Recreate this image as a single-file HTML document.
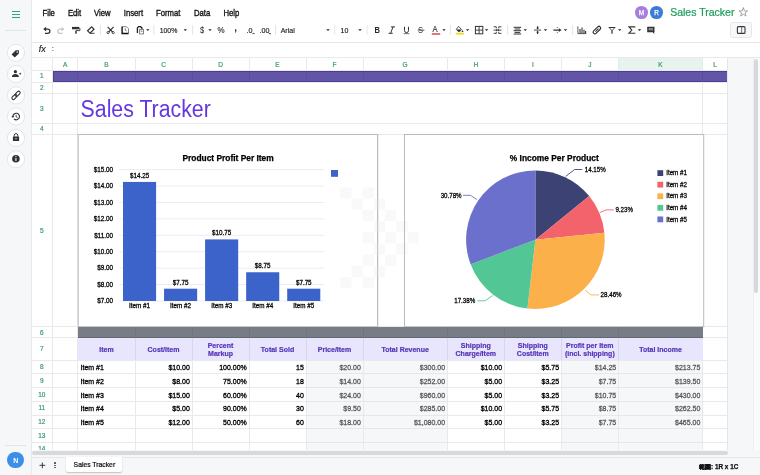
<!DOCTYPE html>
<html><head><meta charset="utf-8">
<style>
*{margin:0;padding:0;box-sizing:border-box}
html,body{width:760px;height:475px;overflow:hidden;background:#fff;font-family:"Liberation Sans",sans-serif;color:#222}
#root{position:absolute;left:0;top:0;width:760px;height:475px;overflow:hidden;background:#fff;will-change:transform}
.a{position:absolute}
.t{position:absolute;white-space:nowrap;line-height:1}
.hl{position:absolute;height:1px;background:#e4e4e4}
.vl{position:absolute;width:1px;background:#e4e4e4}
.menu{font-size:7.7px;color:#111;top:9.7px;-webkit-text-stroke:0.3px #111;transform:scaleY(1.17);transform-origin:0 6.5px}
.sep{position:absolute;top:25px;width:1px;height:10px;background:#e2e2e2}
.car{position:absolute;top:29.5px;width:0;height:0;border-left:2px solid transparent;border-right:2px solid transparent;border-top:2px solid #444}
.ic{position:absolute;top:25px;width:10px;height:10px;overflow:visible}
.rn{position:absolute;left:31px;width:21.5px;text-align:center;font-size:6.5px;color:#3d9a70;line-height:1;-webkit-text-stroke:0.2px #3d9a70}
.cn{position:absolute;top:61.6px;text-align:center;font-size:6.5px;color:#3d9a70;line-height:1;-webkit-text-stroke:0.2px #3d9a70}
.sb{position:absolute;left:7.3px;width:17px;height:17px;border-radius:50%;background:#fff;border:1px solid #e6e7ea}
.d{position:absolute;font-size:7px;line-height:1;color:#000;white-space:nowrap;-webkit-text-stroke:0.3px #000;transform:scaleY(1.1);transform-origin:50% 80%}
.r{text-align:right}
.g{color:#555;-webkit-text-stroke:0.25px #555}
.hd{position:absolute;font-size:7px;line-height:1.15;color:#5534b8;font-weight:bold;text-align:center;white-space:nowrap;-webkit-text-stroke:0.2px #5534b8;transform:scaleY(1.08)}
</style></head><body><div id="root">

<!-- sidebar -->
<div class="a" style="left:0;top:0;width:31.5px;height:475px;background:#f6f7f9;border-right:1px solid #e8e9ec"></div>
<div class="a" style="left:12px;top:11px;width:8px;height:1.3px;background:#2fa56d"></div>
<div class="a" style="left:12px;top:14px;width:8px;height:1.3px;background:#2fa56d"></div>
<div class="a" style="left:12px;top:17px;width:8px;height:1.3px;background:#2fa56d"></div>
<div class="a" style="left:5px;top:29.5px;width:21px;height:1px;background:#e3e4e7"></div>
<svg class="a" style="left:0;top:0" width="32" height="475" viewBox="0 0 32 475">
<g fill="#fff" stroke="#e4e5e8" stroke-width="1">
<circle cx="16" cy="52.8" r="8.6"/><circle cx="16" cy="74.1" r="8.6"/><circle cx="16" cy="95.4" r="8.6"/>
<circle cx="16" cy="116.6" r="8.6"/><circle cx="16" cy="137.9" r="8.6"/><circle cx="16" cy="159.2" r="8.6"/>
</g>
<g fill="#333">
<!-- tag -->
<g transform="rotate(-45 16.1 53.1)"><path d="M12.2 50.9 Q12 50.9 12 51.2 V55 Q12 55.3 12.3 55.3 H17.8 L20.2 53.1 L17.8 50.9 Z"/><circle cx="17.7" cy="53.1" r="0.75" fill="#fff"/></g>
<!-- person add -->
<circle cx="15.4" cy="71.7" r="1.6"/>
<path d="M11.9 77.1 C11.9 74.9 13.6 74.1 15.4 74.1 C17.2 74.1 18.9 74.9 18.9 77.1 Z"/>
<path d="M19.2 73.3 H21.2 V74.1 H19.2 Z M19.8 72.7 H20.6 V74.7 H19.8 Z"/>
<!-- link -->
<g transform="rotate(-45 16 95.4)" fill="none" stroke="#333" stroke-width="1.1"><rect x="10.8" y="93.9" width="6" height="3" rx="1.5"/><rect x="15.2" y="93.9" width="6" height="3" rx="1.5"/></g>
<!-- history -->
<path d="M12.9 116.6 A3.3 3.3 0 1 1 14 119" fill="none" stroke="#333" stroke-width="1.1"/>
<polygon points="11.4,115.9 14.4,115.9 12.9,117.9"/>
<path d="M16.1 114.8 V116.8 L17.6 117.9" fill="none" stroke="#333" stroke-width="0.9"/>
<!-- lock -->
<rect x="12.9" y="136.6" width="6.2" height="4.4" rx="0.6"/>
<path d="M14.2 136.8 V135.4 A1.8 1.8 0 0 1 17.8 135.4 V136.8" fill="none" stroke="#333" stroke-width="1"/>
<circle cx="16" cy="138.7" r="0.6" fill="#fff"/>
<!-- info -->
<circle cx="15.9" cy="158.8" r="3.8"/>
<rect x="15.4" y="158.1" width="1.05" height="2.8" fill="#fff"/><circle cx="15.92" cy="156.6" r="0.62" fill="#fff"/>
</g>
</svg>

<div class="a" style="left:5px;top:444.5px;width:21px;height:1px;background:#e3e4e7"></div>
<div class="a" style="left:7.4px;top:451.6px;width:16.8px;height:16.8px;border-radius:50%;background:#3d8ee8"></div>
<div class="t" style="left:7.4px;width:16.8px;text-align:center;top:456.6px;font-size:7px;color:#fff;font-weight:bold">N</div>

<!-- menu -->
<div class="t menu" style="left:42.5px">File</div>
<div class="t menu" style="left:67.9px">Edit</div>
<div class="t menu" style="left:94px">View</div>
<div class="t menu" style="left:123.8px">Insert</div>
<div class="t menu" style="left:156px">Format</div>
<div class="t menu" style="left:194px">Data</div>
<div class="t menu" style="left:223.5px">Help</div>

<!-- title right -->
<div class="a" style="left:635.1px;top:6.1px;width:12.6px;height:12.6px;border-radius:50%;background:#a47fdd"></div>
<div class="t" style="left:635.1px;width:12.6px;text-align:center;top:9.5px;font-size:6.4px;color:#fff;-webkit-text-stroke:0.25px #fff">M</div>
<div class="a" style="left:650.2px;top:6.1px;width:12.6px;height:12.6px;border-radius:50%;background:#3a7dd6"></div>
<div class="t" style="left:650.2px;width:12.6px;text-align:center;top:9.5px;font-size:6.4px;color:#fff;-webkit-text-stroke:0.25px #fff">R</div>
<div class="t" style="left:670.2px;top:7.3px;font-size:10.5px;color:#1a9c5c;-webkit-text-stroke:0.2px #1a9c5c">Sales Tracker</div>
<svg class="a" style="left:737px;top:6px" width="12" height="12" viewBox="0 0 12 12"><polygon points="6.3,1.6 7.4,4.9 10.6,4.9 8,6.9 9,10.1 6.3,8.1 3.6,10.1 4.6,6.9 2,4.9 5.2,4.9" fill="none" stroke="#9a9a9a" stroke-width="0.9" stroke-linejoin="round"/></svg>
<div class="a" style="left:730.3px;top:22px;width:21.3px;height:15.7px;border:1px solid #e6e7ea;border-radius:2.5px;background:#f7f8f9"></div>
<svg class="a" style="left:730px;top:22px" width="22" height="16" viewBox="730 22 22 16"><rect x="737.4" y="26.6" width="7.6" height="6.8" rx="1" fill="none" stroke="#383838" stroke-width="1.1"/><rect x="741.3" y="26.8" width="0.8" height="6.4" fill="#555"/></svg>

<!-- formula bar -->
<div class="hl" style="left:31.5px;top:41.8px;width:729px;background:#e8e8e8"></div>
<div class="t" style="left:38.8px;top:45.3px;font-size:9px;font-style:italic;color:#222;-webkit-text-stroke:0.15px #222;transform:scaleY(1.08);transform-origin:0 7.6px">fx</div>
<div class="t" style="left:51.8px;top:45.4px;font-size:7.6px;color:#333;-webkit-text-stroke:0.15px #333">:</div>
<div class="hl" style="left:31.5px;top:57px;width:729px;background:#e8e8e8"></div>

<!-- TOOLBAR -->
<svg class="a" style="left:0;top:0" width="760" height="45" viewBox="0 0 760 45">
<g fill="none" stroke="#333" stroke-width="1.3" stroke-linecap="butt" stroke-linejoin="miter">
<!-- undo -->
<polygon points="43.2,29.1 46.2,26.7 46.2,31.5" fill="#333" stroke="none"/>
<path d="M45.5 29.1 H47.6 A2.3 2.1 0 0 1 47.6 33.3 H45"/>
<!-- redo -->
<g stroke="#c9c9c9"><polygon points="64.5,29.1 61.5,26.7 61.5,31.5" fill="#c9c9c9" stroke="none"/>
<path d="M62.2 29.1 H60.1 A2.3 2.1 0 0 0 60.1 33.3 H62.7"/></g>
<!-- paint format -->
<rect x="72" y="26.9" width="7" height="2.4" fill="#333" stroke="none"/>
<path d="M79 28.1 H79.9 V30.6 H75.9 V31.6" stroke-width="0.9"/>
<rect x="75.2" y="31.2" width="1.5" height="2.5" fill="#333" stroke="none"/>
<!-- eraser -->
<polygon points="87.6,30.8 91.6,26.9 94,29.3 90,33.2" stroke-width="1.2"/>
<path d="M90 33.3 H94.6" stroke-width="0.9"/>
<!-- cut -->
<path d="M107.6 26.8 L112.6 32 M113.6 26.8 L108.6 32" stroke-width="1.1"/>
<circle cx="108.1" cy="32.6" r="1.1" stroke-width="0.9"/><circle cx="113.2" cy="32.6" r="1.1" stroke-width="0.9"/>
<!-- copy -->
<path d="M122.4 26.7 H126.5 L128.5 28.7 V33.2" stroke="#777" stroke-width="0.9"/>
<path d="M122.1 26.5 V33.5 H128.6" stroke="#111" stroke-width="1.4"/>
<path d="M125.3 28.4 V30.2 L126.6 30.9" stroke="#555" stroke-width="0.8"/>
<!-- paste -->
<path d="M137.4 33 V27.9 L138.6 26.7 H140.6 L141.9 27.9 V29" stroke="#222" stroke-width="1.3"/>
<rect x="139.6" y="29.4" width="3.9" height="4.5" fill="#fff" stroke="#777" stroke-width="0.9"/>
<path d="M140.6 31.2 H142.5" stroke="#555" stroke-width="0.8"/>
<path d="M390.9 26.9 H395 M388.6 33.3 H392.7 M393 26.9 L390.6 33.3" fill="none" stroke="#333" stroke-width="1"/>
<!-- borders -->
<rect x="475.4" y="26.4" width="7.4" height="7.4" stroke-width="1"/>
<path d="M479.1 26.4 V33.8 M475.4 30.1 H482.8" stroke-width="0.9"/>
<!-- merge -->
<path d="M493.6 26.8 H496.3 V28.4 M501.4 26.8 H498.7 V28.4 M493.6 33.4 H496.3 V31.8 M501.4 33.4 H498.7 V31.8" stroke-width="0.9"/>
<path d="M493.6 30.1 H501.4" stroke-width="0.9"/>
<polygon points="497.5,30.1 496,28.9 496,31.3" fill="#333" stroke="none"/><polygon points="497.5,30.1 499,28.9 499,31.3" fill="#333" stroke="none"/>
<!-- align -->
<path d="M513.6 27.3 H521.2 M514.6 29 H520.2 M513.6 30.7 H521.2 M514.6 32.4 H520.2 M513.6 34 H521.2" stroke-width="1"/>
<!-- valign -->
<path d="M534 30.1 H541.2" stroke-width="0.9"/>
<path d="M537.6 26.2 V28.8 M537.6 31.4 V34" stroke-width="1.2"/>
<polygon points="537.6,29.4 536.2,27.8 539,27.8" fill="#333" stroke="none"/><polygon points="537.6,30.8 536.2,32.4 539,32.4" fill="#333" stroke="none"/>
<!-- wrap -->
<path d="M553.4 30.1 H559.5" stroke-width="1.3"/>
<polygon points="561.6,30.1 558.8,28.2 558.8,32" fill="#333" stroke="none"/>
<path d="M557.3 27 V28 M557.3 32.2 V33.2" stroke-width="0.8"/>
<!-- chart -->
<path d="M577.9 26.4 V33.6 H586.3" stroke-width="0.8"/>
<path d="M580 29 V33.4 M582 27.5 V33.4 M584 29.8 V33.4 M585.6 31 V33.4" stroke-width="1.1"/>
<!-- link -->
<g transform="rotate(-45 596.9 30.1)"><rect x="592.3" y="28.4" width="9.2" height="3.4" rx="1.7" stroke-width="1.2"/><path d="M594.8 30.1 H599" stroke-width="1"/></g>
<!-- filter -->
<path d="M608.2 27 H615.8 L612.6 30.6 V33.8 H611.4 V30.6 Z" fill="#333" stroke="none"/>
<path d="M609.9 28.1 H614.1 L612 30.3 Z" fill="#fff" stroke="none"/>
<!-- sigma -->
<path d="M634.8 27.4 V26.9 H628.9 L631.8 30.1 L628.9 33.3 H634.8 V32.8" stroke-width="1.1"/>
<!-- comment -->
<path d="M647.2 26.7 H654.5 V32.3 H654 L654.6 34 L652.5 32.3 H647.2 Z" fill="#333" stroke="none"/>
<rect x="648.6" y="28" width="4.4" height="2.4" fill="#888" stroke="none"/>
</g>
<!-- text-ish icons -->
<g font-family="Liberation Sans" fill="#222" stroke="#222" stroke-width="0.15">
<text transform="translate(159.7 32.8) scale(1 1.15)" font-size="6.9">100%</text>
<text transform="translate(199.9 32.8) scale(1 1.12)" font-size="7.6" stroke="none">$</text>
<text transform="translate(217.6 32.9) scale(1 1.12)" font-size="8" stroke-width="0.1">%</text>
<text transform="translate(234.6 31.2) scale(1 1.12)" font-size="8" font-weight="bold">,</text>
<text transform="translate(246.6 32.7) scale(1 1.12)" font-size="7.2">.0</text>
<text transform="translate(259.5 32.7) scale(1 1.12)" font-size="7.2">.00</text>
<text transform="translate(280.7 32.7) scale(1 1.12)" font-size="7">Arial</text>
<text transform="translate(340.6 32.7) scale(1 1.12)" font-size="7">10</text>
<text transform="translate(374.6 32.9) scale(1 1.12)" font-size="7.6" font-weight="bold" stroke="none" fill="#2a2a2a">B</text>
<path d="M404.5 26.8 V30.6 A2 2 0 0 0 408.5 30.6 V26.8" fill="none" stroke="#333" stroke-width="1"/>
<text transform="translate(418 33) scale(1 1.12)" font-size="7.6" stroke="none" fill="#333">S</text>
<text transform="translate(432.4 32.2) scale(1 1.12)" font-size="7.6" stroke-width="0.1">A</text>
</g>
<rect x="252.4" y="33.2" width="2.2" height="0.9" fill="#333"/>
<rect x="268.8" y="33.2" width="2.2" height="0.9" fill="#333"/>
<rect x="403.7" y="33.4" width="5.6" height="0.7" fill="#333"/>
<rect x="417.6" y="29.7" width="6.8" height="0.8" fill="#333"/>
<rect x="431.8" y="33.3" width="8.4" height="1.4" fill="#e23b3b"/>
<!-- fill bucket -->
<path d="M458.6 26.4 L461.6 29.6 L459 32.1 L456.2 29.4 Z" fill="none" stroke="#444" stroke-width="0.9"/>
<path d="M456.6 29.6 H461.3 L459 31.8 Z" fill="#222"/>
<circle cx="462.5" cy="31.4" r="0.8" fill="#222"/>
<rect x="455.8" y="32.8" width="8.1" height="1.8" fill="#f2e01e"/>
<!-- carets -->
<g fill="#222">
<polygon points="146.1,29.3 149.5,29.3 147.8,31.1"/>
<polygon points="183.6,29.3 187.0,29.3 185.3,31.1"/>
<polygon points="208.3,29.3 211.7,29.3 210.0,31.1"/>
<polygon points="326.3,29.3 329.7,29.3 328.0,31.1"/>
<polygon points="358.3,29.3 361.7,29.3 360.0,31.1"/>
<polygon points="442.3,29.3 445.7,29.3 444.0,31.1"/>
<polygon points="465.9,29.3 469.3,29.3 467.6,31.1"/>
<polygon points="484.9,29.3 488.3,29.3 486.6,31.1"/>
<polygon points="523.6,29.3 527.0,29.3 525.3,31.1"/>
<polygon points="543.8,29.3 547.2,29.3 545.5,31.1"/>
<polygon points="563.8,29.3 567.2,29.3 565.5,31.1"/>
<polygon points="618.0,29.3 621.4,29.3 619.7,31.1"/>
<polygon points="637.8,29.3 641.2,29.3 639.5,31.1"/>
</g>
<!-- separators -->
<g fill="#e3e3e3">
<rect x="100" y="25" width="0.9" height="10"/>
<rect x="153.4" y="25" width="0.9" height="10"/>
<rect x="192.2" y="25" width="0.9" height="10"/>
<rect x="275.1" y="25" width="0.9" height="10"/>
<rect x="334.3" y="25" width="0.9" height="10"/>
<rect x="366.6" y="25" width="0.9" height="10"/>
<rect x="449.9" y="25" width="0.9" height="10"/>
<rect x="507.2" y="25" width="0.9" height="10"/>
<rect x="572.2" y="25" width="0.9" height="10"/>
</g>
</svg>


<!-- GRID -->
<div class="a" style="left:618.90px;top:57.30px;width:83.70px;height:13.20px;background:#e7f4ee"></div>
<div class="a" style="left:31.50px;top:56.80px;width:696.10px;height:1.00px;background:#e9e9e9"></div>
<div class="a" style="left:31.50px;top:70.00px;width:696.10px;height:1.00px;background:#e9e9e9"></div>
<div class="a" style="left:31.50px;top:81.50px;width:696.10px;height:1.00px;background:#e9e9e9"></div>
<div class="a" style="left:31.50px;top:92.80px;width:696.10px;height:1.00px;background:#e9e9e9"></div>
<div class="a" style="left:31.50px;top:123.00px;width:696.10px;height:1.00px;background:#e9e9e9"></div>
<div class="a" style="left:31.50px;top:133.80px;width:696.10px;height:1.00px;background:#e9e9e9"></div>
<div class="a" style="left:31.50px;top:326.40px;width:696.10px;height:1.00px;background:#e9e9e9"></div>
<div class="a" style="left:31.50px;top:337.40px;width:696.10px;height:1.00px;background:#e9e9e9"></div>
<div class="a" style="left:31.50px;top:359.70px;width:696.10px;height:1.00px;background:#e9e9e9"></div>
<div class="a" style="left:31.50px;top:373.40px;width:696.10px;height:1.00px;background:#e9e9e9"></div>
<div class="a" style="left:31.50px;top:387.10px;width:696.10px;height:1.00px;background:#e9e9e9"></div>
<div class="a" style="left:31.50px;top:400.80px;width:696.10px;height:1.00px;background:#e9e9e9"></div>
<div class="a" style="left:31.50px;top:414.50px;width:696.10px;height:1.00px;background:#e9e9e9"></div>
<div class="a" style="left:31.50px;top:428.20px;width:696.10px;height:1.00px;background:#e9e9e9"></div>
<div class="a" style="left:31.50px;top:441.90px;width:696.10px;height:1.00px;background:#e9e9e9"></div>
<div class="a" style="left:52.10px;top:57.30px;width:1.00px;height:392.50px;background:#e9e9e9"></div>
<div class="a" style="left:77.40px;top:57.30px;width:1.00px;height:392.50px;background:#e9e9e9"></div>
<div class="a" style="left:134.50px;top:57.30px;width:1.00px;height:392.50px;background:#e9e9e9"></div>
<div class="a" style="left:191.50px;top:57.30px;width:1.00px;height:392.50px;background:#e9e9e9"></div>
<div class="a" style="left:248.50px;top:57.30px;width:1.00px;height:392.50px;background:#e9e9e9"></div>
<div class="a" style="left:305.50px;top:57.30px;width:1.00px;height:392.50px;background:#e9e9e9"></div>
<div class="a" style="left:362.50px;top:57.30px;width:1.00px;height:392.50px;background:#e9e9e9"></div>
<div class="a" style="left:446.80px;top:57.30px;width:1.00px;height:392.50px;background:#e9e9e9"></div>
<div class="a" style="left:503.80px;top:57.30px;width:1.00px;height:392.50px;background:#e9e9e9"></div>
<div class="a" style="left:560.80px;top:57.30px;width:1.00px;height:392.50px;background:#e9e9e9"></div>
<div class="a" style="left:617.90px;top:57.30px;width:1.00px;height:392.50px;background:#e9e9e9"></div>
<div class="a" style="left:702.10px;top:57.30px;width:1.00px;height:392.50px;background:#e9e9e9"></div>
<div class="a" style="left:727.10px;top:57.30px;width:1.00px;height:392.50px;background:#e9e9e9"></div>
<div class="a" style="left:78.40px;top:82.50px;width:623.70px;height:10.30px;background:#fff"></div>
<div class="a" style="left:78.40px;top:93.80px;width:623.70px;height:29.20px;background:#fff"></div>
<div class="a" style="left:78.40px;top:124.00px;width:623.70px;height:9.80px;background:#fff"></div>
<div class="a" style="left:78.40px;top:134.80px;width:623.70px;height:191.60px;background:#fff"></div>
<svg class="a" style="left:0;top:0" width="760" height="475" viewBox="0 0 760 475">
<rect x="78.2" y="134.5" width="299.4" height="192.2" fill="#fff" stroke="#b9bcc1" stroke-width="1"/>
<rect x="404.5" y="134.5" width="299.2" height="192.2" fill="#fff" stroke="#b9bcc1" stroke-width="1"/>
<rect x="340.3" y="187.4" width="11.2" height="11.2" fill="#f9f9f9"/>
<rect x="362.7" y="187.4" width="11.2" height="11.2" fill="#f9f9f9"/>
<rect x="351.5" y="198.6" width="11.2" height="11.2" fill="#f9f9f9"/>
<rect x="373.9" y="198.6" width="11.2" height="11.2" fill="#f9f9f9"/>
<rect x="362.7" y="209.8" width="11.2" height="11.2" fill="#f9f9f9"/>
<rect x="385.1" y="209.8" width="11.2" height="11.2" fill="#f9f9f9"/>
<rect x="373.9" y="221.0" width="11.2" height="11.2" fill="#f9f9f9"/>
<rect x="396.3" y="221.0" width="11.2" height="11.2" fill="#f9f9f9"/>
<rect x="362.7" y="232.2" width="11.2" height="11.2" fill="#f9f9f9"/>
<rect x="385.1" y="232.2" width="11.2" height="11.2" fill="#f9f9f9"/>
<rect x="407.5" y="232.2" width="11.2" height="11.2" fill="#f9f9f9"/>
<rect x="373.9" y="243.4" width="11.2" height="11.2" fill="#f9f9f9"/>
<rect x="396.3" y="243.4" width="11.2" height="11.2" fill="#f9f9f9"/>
<rect x="362.7" y="254.6" width="11.2" height="11.2" fill="#f9f9f9"/>
<rect x="385.1" y="254.6" width="11.2" height="11.2" fill="#f9f9f9"/>
<rect x="351.5" y="265.8" width="11.2" height="11.2" fill="#f9f9f9"/>
<rect x="373.9" y="265.8" width="11.2" height="11.2" fill="#f9f9f9"/>
<rect x="340.3" y="277.0" width="11.2" height="11.2" fill="#f9f9f9"/>
<rect x="362.7" y="277.0" width="11.2" height="11.2" fill="#f9f9f9"/>
<path d="M377.7 134.5 V326.7 M404.5 134.5 V326.7" stroke="#b9bcc1" stroke-width="1"/>
<g font-family="Liberation Sans" fill="#000" stroke="#000" stroke-width="0.25">
<text x="228.1" y="161" font-size="8.4" font-weight="bold" text-anchor="middle">Product Profit Per Item</text>
<rect x="119.2" y="169.10" width="205.2" height="1" fill="#e9edf3" stroke="none"/>
<text transform="translate(112.9 171.80) scale(1 1.1)" font-size="6.3" text-anchor="end">$15.00</text>
<rect x="119.2" y="185.53" width="205.2" height="1" fill="#e9edf3" stroke="none"/>
<text transform="translate(112.9 188.22) scale(1 1.1)" font-size="6.3" text-anchor="end">$14.00</text>
<rect x="119.2" y="201.95" width="205.2" height="1" fill="#e9edf3" stroke="none"/>
<text transform="translate(112.9 204.65) scale(1 1.1)" font-size="6.3" text-anchor="end">$13.00</text>
<rect x="119.2" y="218.38" width="205.2" height="1" fill="#e9edf3" stroke="none"/>
<text transform="translate(112.9 221.07) scale(1 1.1)" font-size="6.3" text-anchor="end">$12.00</text>
<rect x="119.2" y="234.80" width="205.2" height="1" fill="#e9edf3" stroke="none"/>
<text transform="translate(112.9 237.50) scale(1 1.1)" font-size="6.3" text-anchor="end">$11.00</text>
<rect x="119.2" y="251.22" width="205.2" height="1" fill="#e9edf3" stroke="none"/>
<text transform="translate(112.9 253.92) scale(1 1.1)" font-size="6.3" text-anchor="end">$10.00</text>
<rect x="119.2" y="267.65" width="205.2" height="1" fill="#e9edf3" stroke="none"/>
<text transform="translate(112.9 270.35) scale(1 1.1)" font-size="6.3" text-anchor="end">$9.00</text>
<rect x="119.2" y="284.07" width="205.2" height="1" fill="#e9edf3" stroke="none"/>
<text transform="translate(112.9 286.77) scale(1 1.1)" font-size="6.3" text-anchor="end">$8.00</text>
<rect x="119.2" y="300.50" width="205.2" height="1" fill="#e9edf3" stroke="none"/>
<text transform="translate(112.9 303.20) scale(1 1.1)" font-size="6.3" text-anchor="end">$7.00</text>
<rect x="123.00" y="181.92" width="33.1" height="119.08" fill="#3b63c9" stroke="none"/>
<text transform="translate(139.55 177.92) scale(1 1.1)" font-size="6.3" text-anchor="middle">$14.25</text>
<text transform="translate(139.55 308.00) scale(1 1.1)" font-size="6.3" text-anchor="middle">Item #1</text>
<rect x="164.05" y="288.68" width="33.1" height="12.32" fill="#3b63c9" stroke="none"/>
<text transform="translate(180.60 284.68) scale(1 1.1)" font-size="6.3" text-anchor="middle">$7.75</text>
<text transform="translate(180.60 308.00) scale(1 1.1)" font-size="6.3" text-anchor="middle">Item #2</text>
<rect x="205.10" y="239.41" width="33.1" height="61.59" fill="#3b63c9" stroke="none"/>
<text transform="translate(221.65 235.41) scale(1 1.1)" font-size="6.3" text-anchor="middle">$10.75</text>
<text transform="translate(221.65 308.00) scale(1 1.1)" font-size="6.3" text-anchor="middle">Item #3</text>
<rect x="246.15" y="272.26" width="33.1" height="28.74" fill="#3b63c9" stroke="none"/>
<text transform="translate(262.70 268.26) scale(1 1.1)" font-size="6.3" text-anchor="middle">$8.75</text>
<text transform="translate(262.70 308.00) scale(1 1.1)" font-size="6.3" text-anchor="middle">Item #4</text>
<rect x="287.20" y="288.68" width="33.1" height="12.32" fill="#3b63c9" stroke="none"/>
<text transform="translate(303.75 284.68) scale(1 1.1)" font-size="6.3" text-anchor="middle">$7.75</text>
<text transform="translate(303.75 308.00) scale(1 1.1)" font-size="6.3" text-anchor="middle">Item #5</text>
<rect x="331" y="170" width="7" height="6.8" fill="#3b63c9" stroke="none"/>
<text x="554.3" y="161" font-size="8.4" font-weight="bold" text-anchor="middle">% Income Per Product</text>
<path d="M535.4 239.7 L535.40 170.40 A69.3 69.3 0 0 1 589.21 196.03 Z" fill="#3d4274" stroke="none"/>
<path d="M535.4 239.7 L589.21 196.03 A69.3 69.3 0 0 1 604.34 232.66 Z" fill="#f2636b" stroke="none"/>
<path d="M535.4 239.7 L604.34 232.66 A69.3 69.3 0 0 1 527.41 308.54 Z" fill="#fcb04a" stroke="none"/>
<path d="M535.4 239.7 L527.41 308.54 A69.3 69.3 0 0 1 470.62 264.32 Z" fill="#52c694" stroke="none"/>
<path d="M535.4 239.7 L470.62 264.32 A69.3 69.3 0 0 1 535.40 170.40 Z" fill="#6a70cc" stroke="none"/>
<path d="M565.7 176.4 L574.6 169.5 L582.2 169.5" fill="none" stroke="#3d4274" stroke-width="0.9"/>
<text transform="translate(584.7 171.7) scale(1 1.1)" font-size="6.2" text-anchor="start">14.15%</text>
<path d="M599.9 212.5 L606.2 209.9 L613.8 209.9" fill="none" stroke="#f2636b" stroke-width="0.9"/>
<text transform="translate(615.4 212.1) scale(1 1.1)" font-size="6.2" text-anchor="start">9.23%</text>
<path d="M585 290.1 L591.1 294.9 L599.2 294.9" fill="none" stroke="#fcb04a" stroke-width="0.9"/>
<text transform="translate(600.6 297.09999999999997) scale(1 1.1)" font-size="6.2" text-anchor="start">28.46%</text>
<path d="M492.6 295.6 L485 300.8 L477.4 300.8" fill="none" stroke="#52c694" stroke-width="0.9"/>
<text transform="translate(475.2 303.0) scale(1 1.1)" font-size="6.2" text-anchor="end">17.38%</text>
<path d="M476.8 199.5 L470.5 195.3 L463 195.3" fill="none" stroke="#6a70cc" stroke-width="0.9"/>
<text transform="translate(461.6 197.5) scale(1 1.1)" font-size="6.2" text-anchor="end">30.78%</text>
<rect x="657.4" y="170.20" width="5.8" height="5.8" fill="#3d4274" stroke="none"/>
<text transform="translate(666.2 175.30) scale(1 1.1)" font-size="6.2">Item #1</text>
<rect x="657.4" y="181.77" width="5.8" height="5.8" fill="#f2636b" stroke="none"/>
<text transform="translate(666.2 186.87) scale(1 1.1)" font-size="6.2">Item #2</text>
<rect x="657.4" y="193.34" width="5.8" height="5.8" fill="#fcb04a" stroke="none"/>
<text transform="translate(666.2 198.44) scale(1 1.1)" font-size="6.2">Item #3</text>
<rect x="657.4" y="204.91" width="5.8" height="5.8" fill="#52c694" stroke="none"/>
<text transform="translate(666.2 210.01) scale(1 1.1)" font-size="6.2">Item #4</text>
<rect x="657.4" y="216.48" width="5.8" height="5.8" fill="#6a70cc" stroke="none"/>
<text transform="translate(666.2 221.58) scale(1 1.1)" font-size="6.2">Item #5</text>
</g></svg>
<div class="cn" style="left:52.60px;width:25.30px">A</div>
<div class="cn" style="left:77.90px;width:57.10px">B</div>
<div class="cn" style="left:135.00px;width:57.00px">C</div>
<div class="cn" style="left:192.00px;width:57.00px">D</div>
<div class="cn" style="left:249.00px;width:57.00px">E</div>
<div class="cn" style="left:306.00px;width:57.00px">F</div>
<div class="cn" style="left:363.00px;width:84.30px">G</div>
<div class="cn" style="left:447.30px;width:57.00px">H</div>
<div class="cn" style="left:504.30px;width:57.00px">I</div>
<div class="cn" style="left:561.30px;width:57.10px">J</div>
<div class="cn" style="left:618.40px;width:84.20px">K</div>
<div class="cn" style="left:702.60px;width:25.00px">L</div>
<div class="rn" style="top:73.45px">1</div>
<div class="rn" style="top:84.85px">2</div>
<div class="rn" style="top:105.60px">3</div>
<div class="rn" style="top:126.10px">4</div>
<div class="rn" style="top:227.80px">5</div>
<div class="rn" style="top:329.60px">6</div>
<div class="rn" style="top:346.25px">7</div>
<div class="rn" style="top:364.25px">8</div>
<div class="rn" style="top:377.95px">9</div>
<div class="rn" style="top:391.65px">10</div>
<div class="rn" style="top:405.35px">11</div>
<div class="rn" style="top:419.05px">12</div>
<div class="rn" style="top:432.75px">13</div>
<div class="rn" style="top:446.45px">14</div>
<div class="a" style="left:52.90px;top:71.20px;width:674.70px;height:10.80px;background:#6255a8;border:1px solid #4b3b9b;border-right:none"></div>
<div class="a" style="left:77.40px;top:71.50px;width:1.00px;height:10.00px;background:#5a4da3"></div>
<div class="a" style="left:134.50px;top:71.50px;width:1.00px;height:10.00px;background:#5a4da3"></div>
<div class="a" style="left:191.50px;top:71.50px;width:1.00px;height:10.00px;background:#5a4da3"></div>
<div class="a" style="left:248.50px;top:71.50px;width:1.00px;height:10.00px;background:#5a4da3"></div>
<div class="a" style="left:305.50px;top:71.50px;width:1.00px;height:10.00px;background:#5a4da3"></div>
<div class="a" style="left:362.50px;top:71.50px;width:1.00px;height:10.00px;background:#5a4da3"></div>
<div class="a" style="left:446.80px;top:71.50px;width:1.00px;height:10.00px;background:#5a4da3"></div>
<div class="a" style="left:503.80px;top:71.50px;width:1.00px;height:10.00px;background:#5a4da3"></div>
<div class="a" style="left:560.80px;top:71.50px;width:1.00px;height:10.00px;background:#5a4da3"></div>
<div class="a" style="left:617.90px;top:71.50px;width:1.00px;height:10.00px;background:#5a4da3"></div>
<div class="a" style="left:702.10px;top:71.50px;width:1.00px;height:10.00px;background:#5a4da3"></div>
<div class="t" style="left:80.60px;top:100.20px;font-size:21.3px;color:#6438de;transform:scaleY(1.1);transform-origin:0 18px">Sales Tracker</div>
<div class="a" style="left:78.00px;top:326.90px;width:624.90px;height:11.00px;background:#787d85;border-bottom:1px solid #62666e"></div>
<div class="a" style="left:134.50px;top:327.00px;width:1.00px;height:10.90px;background:#70757d"></div>
<div class="a" style="left:191.50px;top:327.00px;width:1.00px;height:10.90px;background:#70757d"></div>
<div class="a" style="left:248.50px;top:327.00px;width:1.00px;height:10.90px;background:#70757d"></div>
<div class="a" style="left:305.50px;top:327.00px;width:1.00px;height:10.90px;background:#70757d"></div>
<div class="a" style="left:362.50px;top:327.00px;width:1.00px;height:10.90px;background:#70757d"></div>
<div class="a" style="left:446.80px;top:327.00px;width:1.00px;height:10.90px;background:#70757d"></div>
<div class="a" style="left:503.80px;top:327.00px;width:1.00px;height:10.90px;background:#70757d"></div>
<div class="a" style="left:560.80px;top:327.00px;width:1.00px;height:10.90px;background:#70757d"></div>
<div class="a" style="left:617.90px;top:327.00px;width:1.00px;height:10.90px;background:#70757d"></div>
<div class="a" style="left:78.00px;top:338.00px;width:624.90px;height:22.20px;background:#e7e6fc"></div>
<div class="a" style="left:134.50px;top:338.00px;width:1.00px;height:22.20px;background:#d6d5ee"></div>
<div class="a" style="left:191.50px;top:338.00px;width:1.00px;height:22.20px;background:#d6d5ee"></div>
<div class="a" style="left:248.50px;top:338.00px;width:1.00px;height:22.20px;background:#d6d5ee"></div>
<div class="a" style="left:305.50px;top:338.00px;width:1.00px;height:22.20px;background:#d6d5ee"></div>
<div class="a" style="left:362.50px;top:338.00px;width:1.00px;height:22.20px;background:#d6d5ee"></div>
<div class="a" style="left:446.80px;top:338.00px;width:1.00px;height:22.20px;background:#d6d5ee"></div>
<div class="a" style="left:503.80px;top:338.00px;width:1.00px;height:22.20px;background:#d6d5ee"></div>
<div class="a" style="left:560.80px;top:338.00px;width:1.00px;height:22.20px;background:#d6d5ee"></div>
<div class="a" style="left:617.90px;top:338.00px;width:1.00px;height:22.20px;background:#d6d5ee"></div>
<div class="hd" style="left:77.90px;width:57.10px;top:346.0px">Item</div>
<div class="hd" style="left:135.00px;width:57.00px;top:346.0px">Cost/Item</div>
<div class="hd" style="left:192.00px;width:57.00px;top:342.1px">Percent<br>Markup</div>
<div class="hd" style="left:249.00px;width:57.00px;top:346.0px">Total Sold</div>
<div class="hd" style="left:306.00px;width:57.00px;top:346.0px">Price/Item</div>
<div class="hd" style="left:363.00px;width:84.30px;top:346.0px">Total Revenue</div>
<div class="hd" style="left:447.30px;width:57.00px;top:342.1px">Shipping<br>Charge/Item</div>
<div class="hd" style="left:504.30px;width:57.00px;top:342.1px">Shipping<br>Cost/Item</div>
<div class="hd" style="left:561.30px;width:57.10px;top:342.1px">Profit per Item<br>(incl. shipping)</div>
<div class="hd" style="left:618.40px;width:84.20px;top:346.0px">Total Income</div>
<div class="a" style="left:306.50px;top:360.70px;width:56.00px;height:89.10px;background:#f6f7f9"></div>
<div class="a" style="left:306.50px;top:373.40px;width:56.00px;height:1.00px;background:#e6e7ea"></div>
<div class="a" style="left:306.50px;top:387.10px;width:56.00px;height:1.00px;background:#e6e7ea"></div>
<div class="a" style="left:306.50px;top:400.80px;width:56.00px;height:1.00px;background:#e6e7ea"></div>
<div class="a" style="left:306.50px;top:414.50px;width:56.00px;height:1.00px;background:#e6e7ea"></div>
<div class="a" style="left:306.50px;top:428.20px;width:56.00px;height:1.00px;background:#e6e7ea"></div>
<div class="a" style="left:306.50px;top:441.90px;width:56.00px;height:1.00px;background:#e6e7ea"></div>
<div class="a" style="left:363.50px;top:360.70px;width:83.30px;height:89.10px;background:#f6f7f9"></div>
<div class="a" style="left:363.50px;top:373.40px;width:83.30px;height:1.00px;background:#e6e7ea"></div>
<div class="a" style="left:363.50px;top:387.10px;width:83.30px;height:1.00px;background:#e6e7ea"></div>
<div class="a" style="left:363.50px;top:400.80px;width:83.30px;height:1.00px;background:#e6e7ea"></div>
<div class="a" style="left:363.50px;top:414.50px;width:83.30px;height:1.00px;background:#e6e7ea"></div>
<div class="a" style="left:363.50px;top:428.20px;width:83.30px;height:1.00px;background:#e6e7ea"></div>
<div class="a" style="left:363.50px;top:441.90px;width:83.30px;height:1.00px;background:#e6e7ea"></div>
<div class="a" style="left:561.80px;top:360.70px;width:56.10px;height:89.10px;background:#f6f7f9"></div>
<div class="a" style="left:561.80px;top:373.40px;width:56.10px;height:1.00px;background:#e6e7ea"></div>
<div class="a" style="left:561.80px;top:387.10px;width:56.10px;height:1.00px;background:#e6e7ea"></div>
<div class="a" style="left:561.80px;top:400.80px;width:56.10px;height:1.00px;background:#e6e7ea"></div>
<div class="a" style="left:561.80px;top:414.50px;width:56.10px;height:1.00px;background:#e6e7ea"></div>
<div class="a" style="left:561.80px;top:428.20px;width:56.10px;height:1.00px;background:#e6e7ea"></div>
<div class="a" style="left:561.80px;top:441.90px;width:56.10px;height:1.00px;background:#e6e7ea"></div>
<div class="a" style="left:618.90px;top:360.70px;width:83.20px;height:89.10px;background:#f6f7f9"></div>
<div class="a" style="left:618.90px;top:373.40px;width:83.20px;height:1.00px;background:#e6e7ea"></div>
<div class="a" style="left:618.90px;top:387.10px;width:83.20px;height:1.00px;background:#e6e7ea"></div>
<div class="a" style="left:618.90px;top:400.80px;width:83.20px;height:1.00px;background:#e6e7ea"></div>
<div class="a" style="left:618.90px;top:414.50px;width:83.20px;height:1.00px;background:#e6e7ea"></div>
<div class="a" style="left:618.90px;top:428.20px;width:83.20px;height:1.00px;background:#e6e7ea"></div>
<div class="a" style="left:618.90px;top:441.90px;width:83.20px;height:1.00px;background:#e6e7ea"></div>
<div class="d" style="left:80.50px;top:364.25px">Item #1</div>
<div class="d r" style="left:135.00px;width:54.80px;top:364.25px">$10.00</div>
<div class="d r" style="left:192.00px;width:54.80px;top:364.25px">100.00%</div>
<div class="d r" style="left:249.00px;width:54.80px;top:364.25px">15</div>
<div class="d g r" style="left:306.00px;width:54.80px;top:364.25px">$20.00</div>
<div class="d g r" style="left:363.00px;width:82.10px;top:364.25px">$300.00</div>
<div class="d r" style="left:447.30px;width:54.80px;top:364.25px">$10.00</div>
<div class="d r" style="left:504.30px;width:54.80px;top:364.25px">$5.75</div>
<div class="d g r" style="left:561.30px;width:54.90px;top:364.25px">$14.25</div>
<div class="d g r" style="left:618.40px;width:82.00px;top:364.25px">$213.75</div>
<div class="d" style="left:80.50px;top:377.95px">Item #2</div>
<div class="d r" style="left:135.00px;width:54.80px;top:377.95px">$8.00</div>
<div class="d r" style="left:192.00px;width:54.80px;top:377.95px">75.00%</div>
<div class="d r" style="left:249.00px;width:54.80px;top:377.95px">18</div>
<div class="d g r" style="left:306.00px;width:54.80px;top:377.95px">$14.00</div>
<div class="d g r" style="left:363.00px;width:82.10px;top:377.95px">$252.00</div>
<div class="d r" style="left:447.30px;width:54.80px;top:377.95px">$5.00</div>
<div class="d r" style="left:504.30px;width:54.80px;top:377.95px">$3.25</div>
<div class="d g r" style="left:561.30px;width:54.90px;top:377.95px">$7.75</div>
<div class="d g r" style="left:618.40px;width:82.00px;top:377.95px">$139.50</div>
<div class="d" style="left:80.50px;top:391.65px">Item #3</div>
<div class="d r" style="left:135.00px;width:54.80px;top:391.65px">$15.00</div>
<div class="d r" style="left:192.00px;width:54.80px;top:391.65px">60.00%</div>
<div class="d r" style="left:249.00px;width:54.80px;top:391.65px">40</div>
<div class="d g r" style="left:306.00px;width:54.80px;top:391.65px">$24.00</div>
<div class="d g r" style="left:363.00px;width:82.10px;top:391.65px">$960.00</div>
<div class="d r" style="left:447.30px;width:54.80px;top:391.65px">$5.00</div>
<div class="d r" style="left:504.30px;width:54.80px;top:391.65px">$3.25</div>
<div class="d g r" style="left:561.30px;width:54.90px;top:391.65px">$10.75</div>
<div class="d g r" style="left:618.40px;width:82.00px;top:391.65px">$430.00</div>
<div class="d" style="left:80.50px;top:405.35px">Item #4</div>
<div class="d r" style="left:135.00px;width:54.80px;top:405.35px">$5.00</div>
<div class="d r" style="left:192.00px;width:54.80px;top:405.35px">90.00%</div>
<div class="d r" style="left:249.00px;width:54.80px;top:405.35px">30</div>
<div class="d g r" style="left:306.00px;width:54.80px;top:405.35px">$9.50</div>
<div class="d g r" style="left:363.00px;width:82.10px;top:405.35px">$285.00</div>
<div class="d r" style="left:447.30px;width:54.80px;top:405.35px">$10.00</div>
<div class="d r" style="left:504.30px;width:54.80px;top:405.35px">$5.75</div>
<div class="d g r" style="left:561.30px;width:54.90px;top:405.35px">$8.75</div>
<div class="d g r" style="left:618.40px;width:82.00px;top:405.35px">$262.50</div>
<div class="d" style="left:80.50px;top:419.05px">Item #5</div>
<div class="d r" style="left:135.00px;width:54.80px;top:419.05px">$12.00</div>
<div class="d r" style="left:192.00px;width:54.80px;top:419.05px">50.00%</div>
<div class="d r" style="left:249.00px;width:54.80px;top:419.05px">60</div>
<div class="d g r" style="left:306.00px;width:54.80px;top:419.05px">$18.00</div>
<div class="d g r" style="left:363.00px;width:82.10px;top:419.05px">$1,080.00</div>
<div class="d r" style="left:447.30px;width:54.80px;top:419.05px">$5.00</div>
<div class="d r" style="left:504.30px;width:54.80px;top:419.05px">$3.25</div>
<div class="d g r" style="left:561.30px;width:54.90px;top:419.05px">$7.75</div>
<div class="d g r" style="left:618.40px;width:82.00px;top:419.05px">$465.00</div>
<!-- right gray area -->
<div class="a" style="left:727.1px;top:57.5px;width:25.5px;height:400px;background:#f6f7f9;border-left:1px solid #e6e6e6"></div>
<div class="a" style="left:752.6px;top:57.5px;width:7.4px;height:400px;background:#fbfbfc;border-left:1px solid #eceef0"></div>
<div class="a" style="left:754.3px;top:58.5px;width:4.2px;height:234.5px;border-radius:2px;background:#d6d8db"></div>
<!-- bottom region -->
<div class="a" style="left:31.5px;top:449.8px;width:728.5px;height:7.5px;background:#f6f7f9"></div>
<div class="a" style="left:31.5px;top:450.8px;width:696px;height:4.5px;border-radius:2.2px;background:#d7d9dc"></div>
<div class="a" style="left:31.5px;top:457.2px;width:728.5px;height:18px;background:#f6f7f9;border-top:1px solid #e8e9ec"></div>
<div class="a" style="left:65.8px;top:457px;width:56.4px;height:15.2px;background:#fff;border-radius:0 0 2px 2px;box-shadow:0 1px 1.5px rgba(0,0,0,0.22)"></div>
<div class="t" style="left:73.6px;top:461.9px;font-size:6.8px;color:#111;-webkit-text-stroke:0.22px #111">Sales Tracker</div>
<svg class="a" style="left:38px;top:461px" width="9" height="9" viewBox="0 0 9 9"><path d="M1.5 4.3 H7.2 M4.35 1.5 V7.2" stroke="#333" stroke-width="0.95"/></svg>
<div class="a" style="left:54.4px;top:462.4px;width:1.2px;height:1.2px;background:#555;border-radius:50%"></div>
<div class="a" style="left:54.4px;top:464.8px;width:1.2px;height:1.2px;background:#555;border-radius:50%"></div>
<div class="a" style="left:54.4px;top:467.2px;width:1.2px;height:1.2px;background:#555;border-radius:50%"></div>
<div class="t" style="left:699px;top:464px;font-size:6.4px;color:#111;font-weight:bold;-webkit-text-stroke:0.25px #111">範圍: 1R x 1C</div>


</div></body></html>
